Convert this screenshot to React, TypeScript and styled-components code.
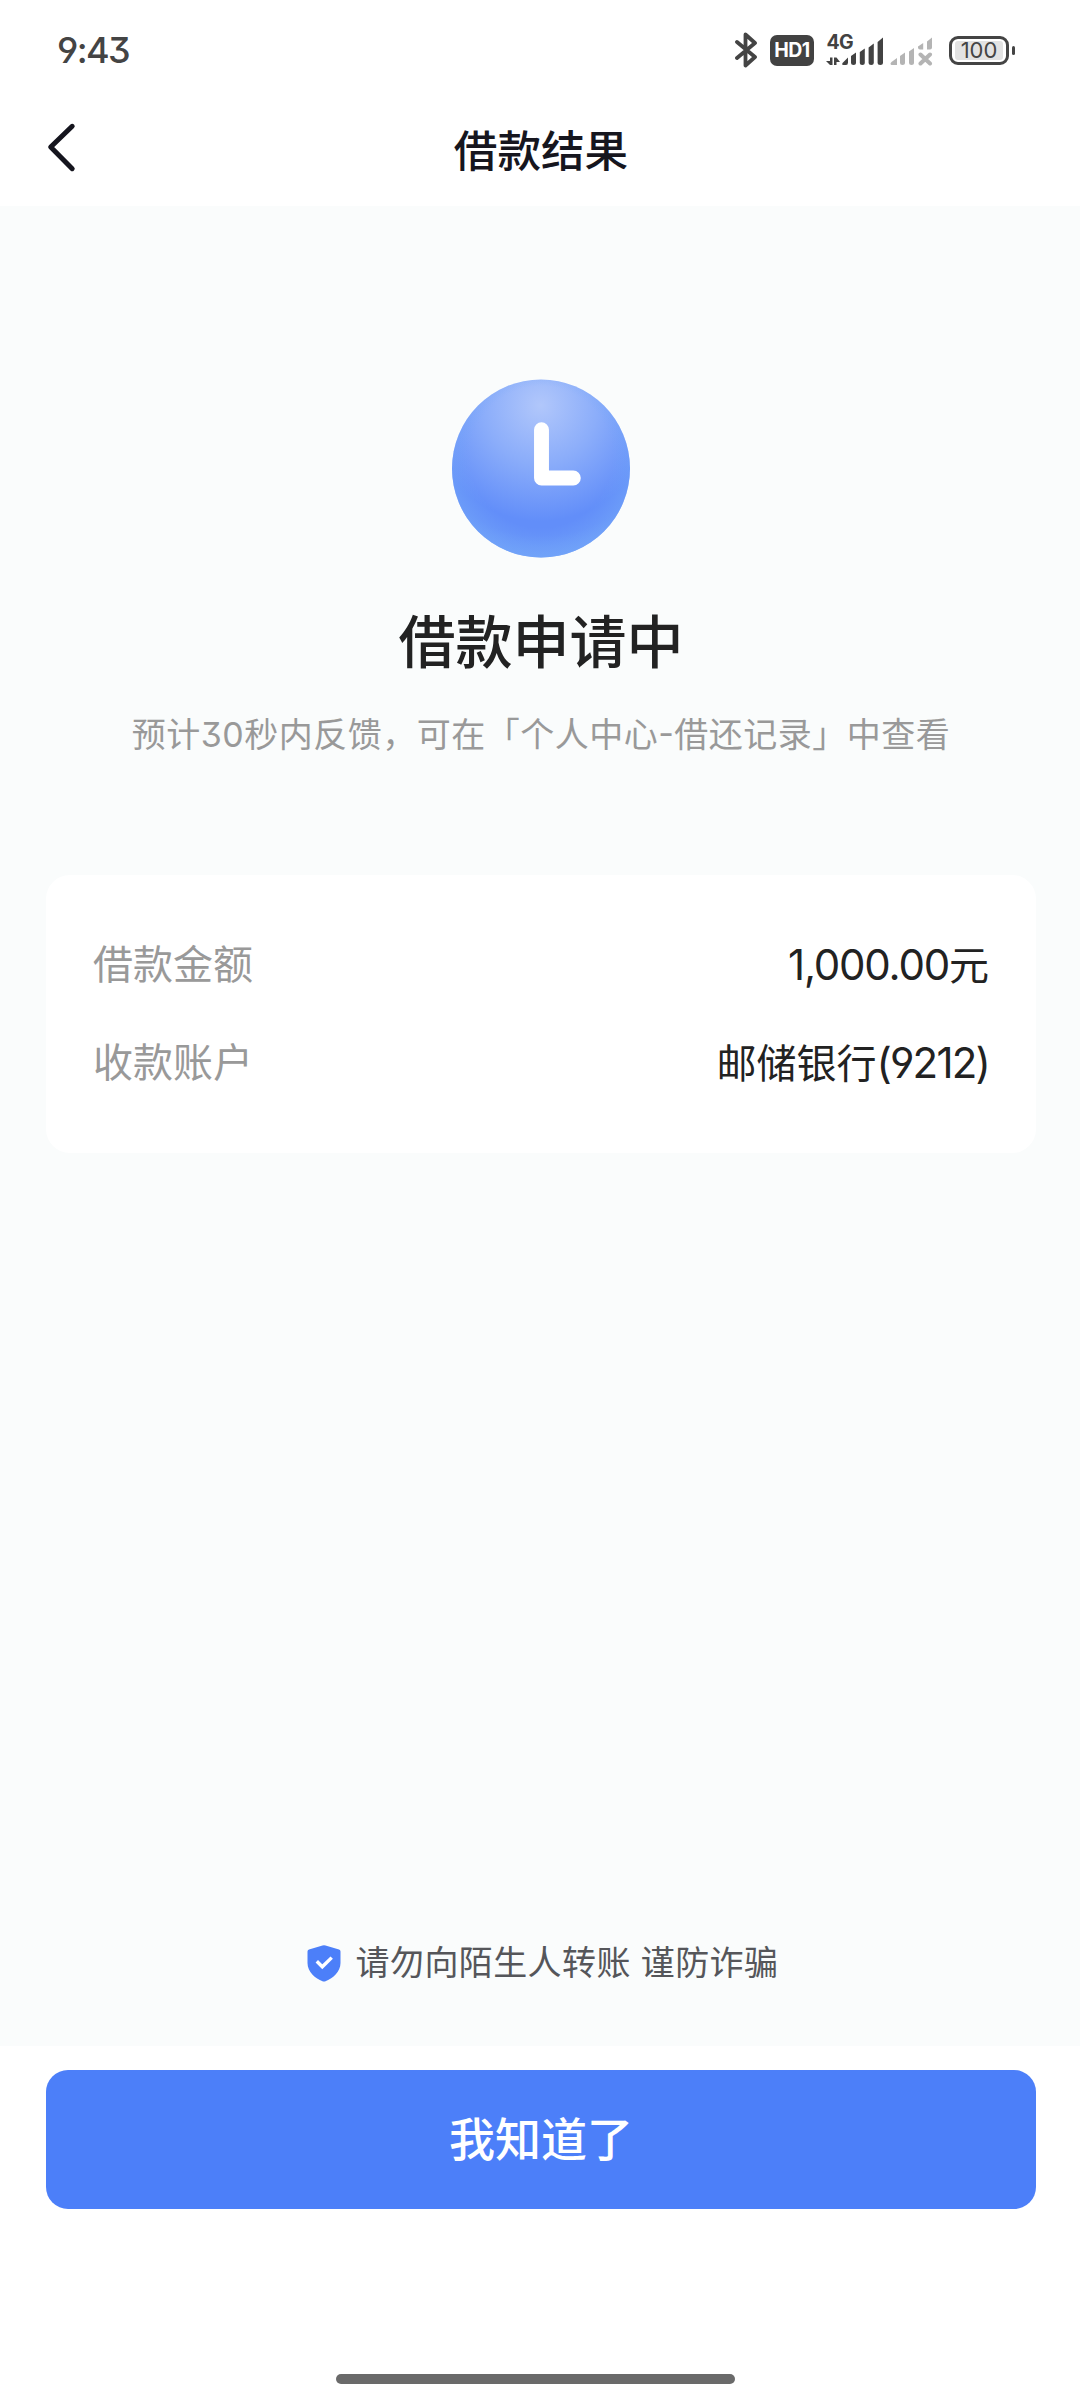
import React from "react";
import styled, { createGlobalStyle } from "styled-components";

const GlobalStyle = createGlobalStyle`
  * { box-sizing: border-box; }
  body {
    margin: 0;
    background: #ffffff;
    font-family: Inter, "Noto Sans CJK SC", sans-serif;
    font-feature-settings: "cv04" 1, "cv09" 1;
  }
`;

const Screen = styled.div`
  width: 1080px;
  height: 2400px;
  display: flex;
  flex-direction: column;
  background: #ffffff;
  overflow: hidden;
`;

const StatusBar = styled.header`
  height: 100px;
  padding: 0 65px 0 57px;
  display: flex;
  align-items: center;
  justify-content: space-between;
  color: #444444;
`;

const Time = styled.span`
  font-size: 36px;
  line-height: 40px;
  font-weight: 500;
  letter-spacing: -1.6px;
`;

const StatusIcons = styled.div`
  display: flex;
  align-items: center;
`;

const HdBadge = styled.span`
  width: 44px;
  height: 31px;
  margin: 0 11px 0 12px;
  border-radius: 7px;
  background: #424242;
  color: #ffffff;
  font-size: 19.5px;
  font-weight: 700;
  letter-spacing: -0.6px;
  line-height: 31px;
  text-align: center;
`;

const Battery = styled.span`
  width: 60px;
  height: 29px;
  margin-left: 16px;
  border: 3px solid #444444;
  border-radius: 9px;
  padding: 2px 3px;
  display: flex;
`;

const Charge = styled.span`
  flex: 1;
  border-radius: 3px;
  background: #e2e2e2;
  color: #444444;
  font-size: 22px;
  font-weight: 400;
  line-height: 19px;
  text-align: center;
`;

const BatteryTip = styled.span`
  width: 3px;
  height: 9px;
  margin-left: 3px;
  border-radius: 1.5px;
  background: #444444;
`;

const NavBar = styled.nav`
  height: 106px;
  display: grid;
  grid-template-columns: 120px 1fr 118px;
  align-items: start;
`;

const BackButton = styled.button`
  border: 0;
  padding: 20px 0 0 44px;
  background: none;
  display: flex;
`;

const NavTitle = styled.h1`
  margin: 21px 0 0;
  color: #16161e;
  font-size: 43.6px;
  font-weight: 500;
  line-height: 62px;
  text-align: center;
`;

const Main = styled.main`
  height: 1840px;
  padding: 173px 44px 0 46px;
  background: #fafcfc;
  display: flex;
  flex-direction: column;
  align-items: center;
`;

const ResultTitle = styled.h2`
  margin: 45px 0 0;
  color: #222222;
  font-size: 57px;
  font-weight: 500;
  line-height: 80px;
`;

const ResultHint = styled.p`
  margin: 28px 0 0;
  color: #999999;
  font-size: 34px;
  line-height: 48px;
  letter-spacing: 0.5px;
  white-space: nowrap;
  font-feature-settings: "cv04" 1, "cv09" 1, "case" 1;
`;

const Card = styled.dl`
  width: 990px;
  height: 278px;
  margin: 116px 0 0;
  padding: 41px 47px 0;
  border-radius: 24px;
  background: #ffffff;
`;

const Row = styled.div`
  height: 98px;
  display: flex;
  justify-content: space-between;
  line-height: 98px;
`;

const Label = styled.dt`
  color: #999999;
  font-size: 40px;
`;

const Value = styled.dd`
  margin: 0;
  color: #222222;
  font-size: 40px;
`;

const Digits = styled.span<{ $spacing: number }>`
  font-size: 42px;
  letter-spacing: ${(p) => p.$spacing}px;
`;

const Notice = styled.p`
  margin: auto 0 59px;
  padding-left: 3px;
  display: flex;
  align-items: center;
  gap: 15px;
  color: #55565a;
  font-size: 34px;
  line-height: 48px;
  letter-spacing: 0.4px;
`;

const Footer = styled.footer`
  flex: 1;
  padding: 24px 44px 16px 46px;
  display: flex;
  flex-direction: column;
  align-items: center;
  justify-content: space-between;
`;

const PrimaryButton = styled.button`
  width: 990px;
  height: 139px;
  border: 0;
  border-radius: 22px;
  padding: 0;
  background: #4c7ff9;
  color: #ffffff;
  font-family: inherit;
  font-size: 46px;
  font-weight: 500;
  line-height: 139px;
`;

const HomeIndicator = styled.div`
  width: 399px;
  height: 10px;
  margin-right: 11px;
  border-radius: 5px;
  background: #6a6a6a;
`;

const SecondSim = styled.svg`
  margin-left: 6px;
`;

function BluetoothIcon() {
  return (
    <svg width="23" height="36" viewBox="0 0 23 36" fill="none" stroke="#444444" strokeWidth="3.8" strokeLinejoin="round" strokeLinecap="round">
      <path d="M2 10 L20 25 L10.5 33.5 V2.5 L20 11 L2 26" />
    </svg>
  );
}

function SignalIcon() {
  return (
    <svg width="59" height="40" viewBox="-1 -4 59 40" fill="#424242">
      <text x="0.5" y="14.5" fontSize="19.5" fontWeight="700" letterSpacing="-0.6">4G</text>
      <path d="M4 23.5 H6.5 V31 H4 L0 27 H4Z M8 23.5 H10.5 L14 28 H10.5 V31 H8Z" />
      <path d="M22 23.5 V28.5 Q22 31 20 31 H17.5 Q15 31 17 28.5Z" />
      <path d="M25 22 L30 18.5 V28.5 Q30 31 27.5 31 Q25 31 25 28.5Z" />
      <path d="M33.8 18 L38.8 14.5 V28.5 Q38.8 31 36.3 31 Q33.8 31 33.8 28.5Z" />
      <path d="M42.6 13.5 L47.8 9.5 V28.5 Q47.8 31 45.2 31 Q42.6 31 42.6 28.5Z" />
      <path d="M51.6 8 L57 3.5 V28.5 Q57 31 54.3 31 Q51.6 31 51.6 28.5Z" />
    </svg>
  );
}

function NoSignalIcon() {
  return (
    <SecondSim width="43" height="32" viewBox="0 0 43 32" fill="#b4b4b4">
      <path d="M7 24 V31 H1.5 Q-0.5 30 1.5 28Z" />
      <path d="M10 22 L15 18.5 V28.5 Q15 31 12.5 31 Q10 31 10 28.5Z" />
      <path d="M19 17.5 L24 14 V28.5 Q24 31 21.5 31 Q19 31 19 28.5Z" />
      <path d="M28 12.5 L33.2 9 V15.5 H30 Q28 15.5 28 13.5Z M37 7.5 L42 3.5 V13.5 Q42 15.5 40 15.5 H37Z" />
      <path d="M30.5 20.5 L40 29.5 M40 20.5 L30.5 29.5" stroke="#b4b4b4" strokeWidth="4" strokeLinecap="round" />
    </SecondSim>
  );
}

function BackIcon() {
  return (
    <svg width="34" height="56" viewBox="0 0 34 56" fill="none" stroke="#15151e" strokeWidth="5" strokeLinecap="round" strokeLinejoin="round">
      <path d="M28.2 6.3 L6.7 27 L28.2 48.7" />
    </svg>
  );
}

function ClockIcon() {
  return (
    <svg width="178" height="179" viewBox="0 0 179 179">
      <defs>
        <radialGradient id="face" gradientUnits="userSpaceOnUse" cx="89" cy="26" r="153">
          <stop offset="0" stopColor="#b1c7fb" />
          <stop offset="0.38" stopColor="#8badfa" />
          <stop offset="0.76" stopColor="#628ef9" />
          <stop offset="0.86" stopColor="#628ef9" />
          <stop offset="1" stopColor="#6b9bf9" />
        </radialGradient>
        <radialGradient id="rim" gradientUnits="userSpaceOnUse" cx="89.5" cy="78" r="105">
          <stop offset="0.68" stopColor="#74a7f8" stopOpacity="0" />
          <stop offset="1" stopColor="#74a7f8" stopOpacity="0.75" />
        </radialGradient>
      </defs>
      <circle cx="89.5" cy="89.5" r="89.5" fill="url(#face)" />
      <circle cx="89.5" cy="89.5" r="89.5" fill="url(#rim)" />
      <path d="M90 50.5 V99 H122" fill="none" stroke="#ffffff" strokeWidth="15" strokeLinecap="round" strokeLinejoin="round" />
    </svg>
  );
}

function ShieldIcon() {
  return (
    <svg width="34" height="37" viewBox="0 0 34 37">
      <path d="M15.5 0.6 Q17 0 18.5 0.6 L32 4.6 Q33.5 5.1 33.5 6.6 V18 C33.5 27 25.5 33.5 18.5 36.2 Q17 36.8 15.5 36.2 C8.5 33.5 0.5 27 0.5 18 V6.6 Q0.5 5.1 2 4.6Z" fill="#4c7ff9" />
      <path d="M9.8 16.3 L15.3 21.8 L24.7 12.6" fill="none" stroke="#ffffff" strokeWidth="3.4" />
    </svg>
  );
}

export default function App() {
  return (
    <Screen>
      <GlobalStyle />
      <StatusBar>
        <Time>9:43</Time>
        <StatusIcons>
          <BluetoothIcon />
          <HdBadge>HD1</HdBadge>
          <SignalIcon />
          <NoSignalIcon />
          <Battery>
            <Charge>100</Charge>
          </Battery>
          <BatteryTip />
        </StatusIcons>
      </StatusBar>
      <NavBar>
        <BackButton aria-label="返回">
          <BackIcon />
        </BackButton>
        <NavTitle>借款结果</NavTitle>
      </NavBar>
      <Main>
        <ClockIcon />
        <ResultTitle>借款申请中</ResultTitle>
        <ResultHint>预计30秒内反馈，可在「个人中心-借还记录」中查看</ResultHint>
        <Card>
          <Row>
            <Label>借款金额</Label>
            <Value>
              <Digits $spacing={-1.2}>1,000.00</Digits>元
            </Value>
          </Row>
          <Row>
            <Label>收款账户</Label>
            <Value>
              邮储银行<Digits $spacing={-1.8}>(9212)</Digits>
            </Value>
          </Row>
        </Card>
        <Notice>
          <ShieldIcon />
          请勿向陌生人转账 谨防诈骗
        </Notice>
      </Main>
      <Footer>
        <PrimaryButton>我知道了</PrimaryButton>
        <HomeIndicator />
      </Footer>
    </Screen>
  );
}
